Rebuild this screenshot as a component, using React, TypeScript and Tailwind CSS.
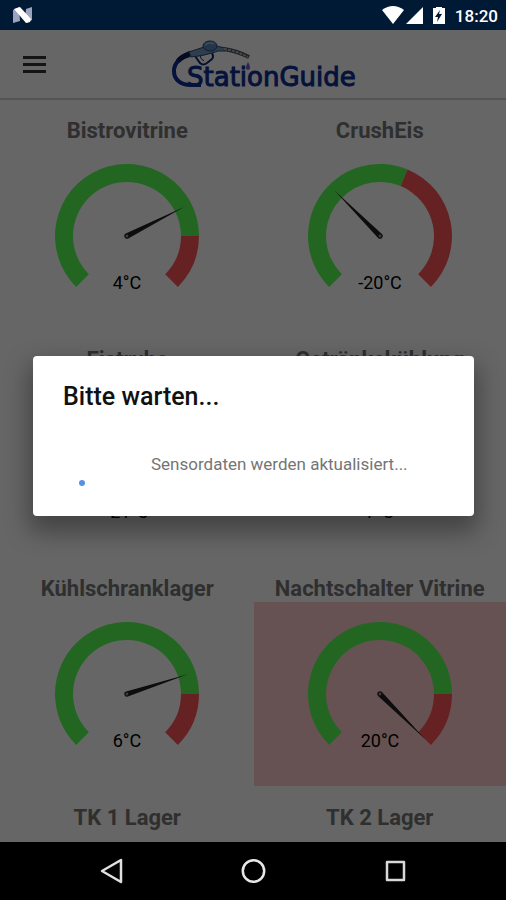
type Sensor = {
  name: string;
  value?: number;
  limit: number;
};

const MIN = -40;
const MAX = 20;

const sensors: Sensor[] = [
  { name: "Bistrovitrine", value: 4, limit: 10 },
  { name: "CrushEis", value: -20, limit: -5 },
  { name: "Eistruhe", value: -21, limit: -5 },
  { name: "Getränkekühlung", value: 7, limit: 10 },
  { name: "Kühlschranklager", value: 6, limit: 10 },
  { name: "Nachtschalter Vitrine", value: 20, limit: 10 },
  { name: "TK 1 Lager", limit: -5 },
  { name: "TK 2 Lager", limit: -5 },
];

// degrees clockwise from twelve o'clock, the scale spans 270
const toAngle = (value: number) => ((value - MIN) / (MAX - MIN)) * 270 - 135;

const point = (angle: number, r: number) => {
  const rad = (angle * Math.PI) / 180;
  return `${(72 + r * Math.sin(rad)).toFixed(2)} ${(72 - r * Math.cos(rad)).toFixed(2)}`;
};

const band = (from: number, to: number) => {
  const large = to - from > 180 ? 1 : 0;
  return `M${point(from, 72)} A72 72 0 ${large} 1 ${point(to, 72)} L${point(to, 54)} A54 54 0 ${large} 0 ${point(from, 54)} Z`;
};

const Gauge = ({ value, limit }: { value: number; limit: number }) => {
  const split = toAngle(limit);
  return (
    <svg viewBox="0 0 144 144" className="w-36 h-36" role="img" aria-label={`${value}°C`}>
      <path d={band(-135, split)} fill="#55ff55" />
      <path d={band(split, 135)} fill="#ff5555" />
      <g transform={`rotate(${toAngle(value)} 72 72)`}>
        <path d="M69.3 72 L72 8 L74.7 72 A2.7 2.7 0 0 1 69.3 72 Z" fill="#222" />
        <circle cx="72" cy="72" r="1.4" fill="#999" />
      </g>
      <text x="72" y="125" textAnchor="middle" fontSize="18" fill="#000" className="font-[Roboto,sans-serif]">
        {value}°C
      </text>
    </svg>
  );
};

const Logo = () => (
  <svg width="192" height="56" viewBox="0 -2 192 56" role="img" aria-label="StationGuide">
    <path d="M21 17 C10 20 5 26 5 33 C5 42 12 47 22 47 L32 47" fill="none" stroke="#0c2f96" strokeWidth="4" />
    <path d="M9 23 C13 18 17 17 22 15" fill="none" stroke="#081c5c" strokeWidth="5" />
    <path d="M26 18 L31 25 Q34 28 38 25 L43 21 Q45 19 43 15" fill="none" stroke="#0c2878" strokeWidth="2" />
    <path d="M31 17 Q31 21 35 23" fill="none" stroke="#0c2878" strokeWidth="1" />
    <path d="M20 14 L32 10 Q43 6 56 10 L56 13 Q49 12 43 15 Q34 18 22 19 Z" fill="#7898b8" stroke="#284878" strokeWidth="1" />
    <ellipse cx="41" cy="8" rx="7" ry="5" fill="#5888b8" stroke="#284878" strokeWidth="1" />
    <path d="M36 7 Q40 3 45 6" fill="none" stroke="#90b8d8" strokeWidth="2" />
    <path d="M55 11 Q68 13 80 19" fill="none" stroke="#4b5158" strokeWidth="4" />
    <path d="M55 11 Q68 13 79 19" fill="none" stroke="#b0b4b8" strokeWidth="2" strokeDasharray="3 1" />
    <path d="M79 24 Q83 31 79 32 Q75 31 79 24 Z" fill="#7060d0" />
    <text x="18" y="48" fontSize="26" fill="#0c2f96" stroke="#0c2f96" strokeWidth="1" className="font-['DejaVu_Sans',sans-serif]">
      StationGuide
    </text>
  </svg>
);

const StatusBar = () => (
  <div className="h-[30px] shrink-0 bg-[#001a36] flex items-center justify-between pl-3 pr-2 text-white">
    <svg width="21" height="18" viewBox="0 0 21 18" aria-hidden="true">
      <path d="M1 4 L7 1 L8 15 L1 17 Z" fill="#9aa5bd" />
      <path d="M14 3 L20 1 L20 14 L15 17 L13 12 Z" fill="#9aa5bd" />
      <path d="M2 3 L8 1 L19 13 L18 16 L14 17 Z" fill="#fff" />
    </svg>
    <div className="flex items-center">
      <svg width="63" height="18" viewBox="0 0 63 18" fill="#fff" aria-hidden="true">
        <path d="M0 4 Q11 -4 22 4 L11 18 Z" />
        <path d="M41 1 V18 H24 Z" />
        <path d="M54 1 H60 V2 H63 V18 H51 V2 H54 Z" />
        <path d="M58 4 L53 11 H56 L55 16 L60 8 H57 Z" fill="#001a36" />
      </svg>
      <span className="ml-2.5 text-[17px] leading-6 pt-0.5 font-medium">18:20</span>
    </div>
  </div>
);

const WaitDialog = () => (
  <div className="absolute inset-0 bg-black/60 flex items-center pl-[33px] pr-8">
    <div
      role="dialog"
      aria-labelledby="wait-title"
      className="w-full h-40 bg-white rounded-sm px-[30px] pt-6 shadow-[0_12px_24px_4px_rgba(0,0,0,0.35)]"
    >
      <h2 id="wait-title" className="text-[25px] leading-[34px] font-medium text-[#111]">Bitte warten...</h2>
      <div className="flex pt-9 pl-4">
        <span className="mt-[30px] w-1.5 h-1.5 rounded-full bg-[#5592e4]" />
        <p className="ml-[66px] text-[17px] leading-7 text-[#757575]">Sensordaten werden aktualisiert...</p>
      </div>
    </div>
  </div>
);

const NavBar = () => (
  <nav className="h-[58px] shrink-0 bg-black flex px-10">
    <button aria-label="Zurück" className="flex-1 flex items-center justify-center">
      <svg width="24" height="26" viewBox="0 0 24 26" fill="none" stroke="#e0e0e0" strokeWidth="2.5" strokeLinejoin="round">
        <path d="M22 2 V24 L3 13 Z" />
      </svg>
    </button>
    <button aria-label="Startseite" className="flex-1 flex items-center justify-center">
      <svg width="26" height="26" viewBox="0 0 26 26" fill="none" stroke="#e8e8e8" strokeWidth="2.5">
        <circle cx="13.5" cy="13" r="10.7" />
      </svg>
    </button>
    <button aria-label="Übersicht" className="flex-1 flex items-center justify-center">
      <svg width="22" height="22" viewBox="0 0 22 22" fill="none" stroke="#d8d8d8" strokeWidth="2.5" strokeLinejoin="round">
        <rect x="3" y="2" width="17" height="18" />
      </svg>
    </button>
  </nav>
);

const App = () => {
  return (
    <div className="h-screen flex flex-col overflow-hidden bg-white font-[Roboto,sans-serif]">
      <StatusBar />
      <div className="relative flex-1 min-h-0 flex flex-col">
        <header className="h-[70px] shrink-0 border-b-2 border-[#d0d0d0] grid grid-cols-[1fr_auto_1fr] items-center pl-[23px]">
          <button aria-label="Menü" className="w-[23px] flex flex-col gap-1">
            <span className="h-[3px] bg-[#333]" />
            <span className="h-[3px] bg-[#333]" />
            <span className="h-[3px] bg-[#333]" />
          </button>
          <Logo />
        </header>
        <main className="flex-1 min-h-0 overflow-hidden pt-4 pl-px grid grid-cols-2 content-start gap-y-[17px]">
          {sensors.map(({ name, value, limit }) => (
            <section key={name}>
              <h3 className="h-7 text-[22px] leading-[30px] font-bold text-center text-[#777] whitespace-nowrap">{name}</h3>
              {value !== undefined && (
                <div className={`h-[184px] flex items-center justify-center ${value > limit ? "bg-[#ffcccc]" : ""}`}>
                  <Gauge value={value} limit={limit} />
                </div>
              )}
            </section>
          ))}
        </main>
        <WaitDialog />
      </div>
      <NavBar />
    </div>
  );
};

export default App;
